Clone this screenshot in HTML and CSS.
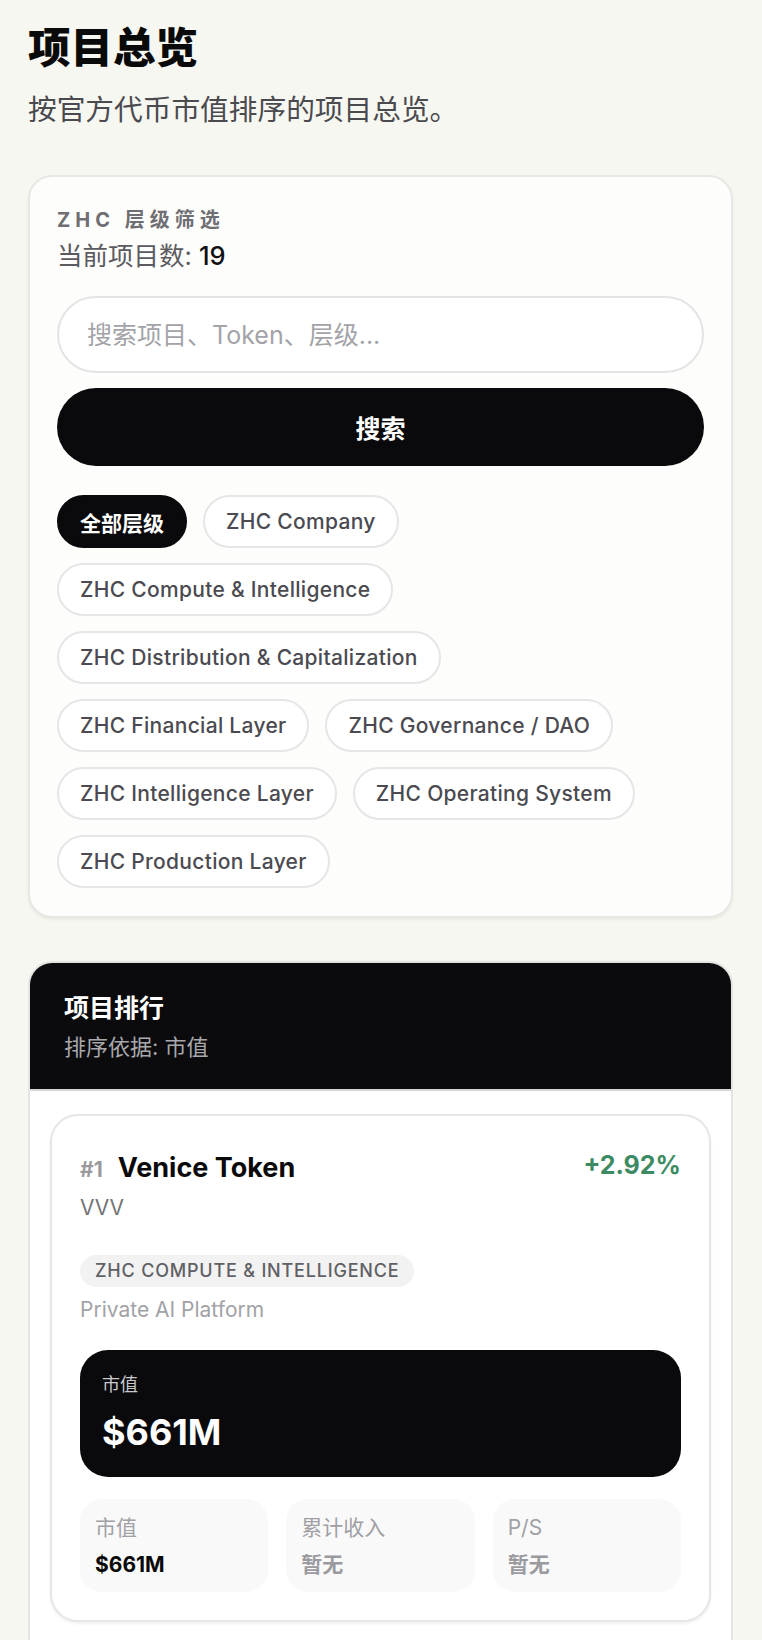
FILE: index.html
```html
<!DOCTYPE html>
<html lang="zh-CN">
<head>
<meta charset="utf-8">
<title>项目总览</title>
<link rel="stylesheet" href="styles.css">
</head>
<body>
  <header class="page-head">
    <h1 class="page-title">项目总览</h1>
    <p class="page-sub">按官方代币市值排序的项目总览。</p>
  </header>

  <section class="filter-card">
    <div class="filter-label">ZHC 层级筛选</div>
    <div class="filter-count">当前项目数: <span class="count-num">19</span></div>
    <input class="search-input" type="text" placeholder="搜索项目、Token、层级...">
    <button class="search-btn" type="button">搜索</button>
    <div class="chips">
      <span class="chip chip-active">全部层级</span>
      <span class="chip">ZHC Company</span>
      <span class="chip">ZHC Compute &amp; Intelligence</span>
      <span class="chip">ZHC Distribution &amp; Capitalization</span>
      <span class="chip">ZHC Financial Layer</span>
      <span class="chip">ZHC Governance / DAO</span>
      <span class="chip">ZHC Intelligence Layer</span>
      <span class="chip">ZHC Operating System</span>
      <span class="chip">ZHC Production Layer</span>
    </div>
  </section>

  <section class="rank-card">
    <div class="rank-head">
      <div class="rank-title">项目排行</div>
      <div class="rank-sub">排序依据: 市值</div>
    </div>
    <div class="rank-body">
      <article class="item">
        <div class="item-top">
          <div class="item-name-row">
            <span class="item-rank">#1</span>
            <span class="item-name">Venice Token</span>
          </div>
          <span class="item-change">+2.92%</span>
        </div>
        <div class="item-symbol">VVV</div>
        <span class="item-tag">ZHC Compute &amp; Intelligence</span>
        <div class="item-desc">Private AI Platform</div>
        <div class="item-hero">
          <div class="hero-label">市值</div>
          <div class="hero-value">$661M</div>
        </div>
        <div class="item-stats">
          <div class="stat">
            <div class="stat-label">市值</div>
            <div class="stat-value">$661M</div>
          </div>
          <div class="stat">
            <div class="stat-label">累计收入</div>
            <div class="stat-value stat-empty">暂无</div>
          </div>
          <div class="stat">
            <div class="stat-label">P/S</div>
            <div class="stat-value stat-empty">暂无</div>
          </div>
        </div>
      </article>
    </div>
  </section>
</body>
</html>
```
FILE: styles.css
```css
* { box-sizing: border-box; }
html, body { margin: 0; }
body {
  background: #f7f7f2;
  font-family: "Inter", "Noto Sans CJK SC", sans-serif;
  color: #111;
  padding: 21px 29px 40px 28px;
}

.page-title {
  margin: 0;
  font-size: 42.5px;
  line-height: 53px;
  font-weight: 800;
  color: #0a0a0a;
}
.page-sub {
  margin: 16px 0 0;
  font-size: 28.7px;
  line-height: 40px;
  color: #4a4a4f;
}

.filter-card {
  margin-top: 45px;
  background: #fdfdfb;
  border: 2px solid #e7e7e4;
  border-radius: 24px;
  padding: 31px 27px 28px;
  box-shadow: 0 2px 3px rgba(0, 0, 0, 0.05);
  display: flex;
  flex-direction: column;
}
.filter-label {
  font-size: 20px;
  line-height: 24px;
  font-weight: 700;
  letter-spacing: 0.25em;
  color: #6e6e73;
}
.filter-count {
  margin-top: 7px;
  font-size: 25.5px;
  line-height: 34px;
  color: #5a5a5f;
}
.count-num { color: #111; font-weight: 500; }

.search-input {
  margin-top: 23px;
  height: 77px;
  width: 100%;
  border: 2px solid #e4e4e4;
  border-radius: 40px;
  padding: 0 28px;
  font-family: inherit;
  font-size: 25px;
  background: #fff;
  color: #111;
  outline: none;
}
.search-input::placeholder { color: #a3a3a8; }

.search-btn {
  margin-top: 15px;
  height: 78px;
  width: 100%;
  border: none;
  border-radius: 40px;
  background: #0a0a0c;
  color: #fff;
  font-family: inherit;
  font-size: 25px;
  font-weight: 700;
}

.chips {
  margin-top: 29px;
  display: flex;
  flex-wrap: wrap;
  gap: 15px 16px;
}
.chip {
  height: 53px;
  display: inline-flex;
  align-items: center;
  padding: 0 21px;
  border: 2px solid #e6e6e6;
  border-radius: 27px;
  background: #fff;
  font-size: 21px;
  font-weight: 500;
  letter-spacing: 0.3px;
  color: #4a4a50;
  white-space: nowrap;
}
.chip-active {
  background: #0a0a0c;
  border-color: #0a0a0c;
  color: #fff;
  font-weight: 700;
  letter-spacing: 0;
}

.rank-card {
  margin-top: 43px;
  border: 2px solid #e4e4e2;
  border-radius: 24px;
  overflow: hidden;
  background: #fff;
}
.rank-head {
  background: #0b0b0d;
  padding: 28px 34px 27px;
  border-bottom: 2px solid #d6d6d6;
}
.rank-title {
  font-size: 25px;
  line-height: 34px;
  font-weight: 700;
  color: #fff;
}
.rank-sub {
  margin-top: 7px;
  font-size: 22px;
  line-height: 30px;
  color: #a8a8ac;
}
.rank-body {
  padding: 23px 20px 40px;
}

.item {
  border: 2px solid #e6e6e6;
  border-radius: 28px;
  background: #fff;
  padding: 34px 28px 28px;
  box-shadow: 0 2px 3px rgba(0, 0, 0, 0.06);
  display: flex;
  flex-direction: column;
  align-items: flex-start;
}
.item-top {
  width: 100%;
  display: flex;
  justify-content: space-between;
  align-items: flex-start;
}
.item-name-row {
  display: flex;
  align-items: baseline;
  gap: 15px;
}
.item-rank {
  font-size: 21px;
  font-weight: 700;
  color: #9a9a9e;
}
.item-name {
  font-size: 27px;
  line-height: 36px;
  font-weight: 700;
  color: #0a0a0a;
}
.item-change {
  font-size: 25px;
  line-height: 30px;
  font-weight: 700;
  color: #3d8b63;
}
.item-symbol {
  margin-top: 8px;
  font-size: 21px;
  line-height: 28px;
  color: #737378;
}
.item-tag {
  margin-top: 33px;
  height: 32px;
  line-height: 32px;
  padding: 0 15px;
  border-radius: 16px;
  background: #f2f2f2;
  color: #606065;
  font-size: 18px;
  font-weight: 500;
  letter-spacing: 0.8px;
  text-transform: uppercase;
}
.item-desc {
  margin-top: 9px;
  font-size: 21px;
  line-height: 28px;
  color: #a2a2a7;
}

.item-hero {
  margin-top: 26px;
  width: 100%;
  background: #0a0a0c;
  border-radius: 28px;
  padding: 23px 22px 23px;
}
.hero-label {
  font-size: 18px;
  line-height: 24px;
  color: #c9c9cd;
}
.hero-value {
  margin-top: 13px;
  font-size: 36px;
  line-height: 44px;
  font-weight: 700;
  color: #fff;
}

.item-stats {
  margin-top: 22px;
  width: 100%;
  display: grid;
  grid-template-columns: repeat(3, 1fr);
  gap: 18px;
}
.stat {
  background: #f9f9f9;
  border-radius: 22px;
  padding: 15px 15px 13px;
}
.stat-label {
  font-size: 21px;
  line-height: 28px;
  color: #a0a0a5;
}
.stat-value {
  margin-top: 9px;
  font-size: 21px;
  line-height: 28px;
  font-weight: 700;
  color: #0a0a0a;
}
.stat-empty {
  color: #9a9a9f;
  font-weight: 600;
}
```
